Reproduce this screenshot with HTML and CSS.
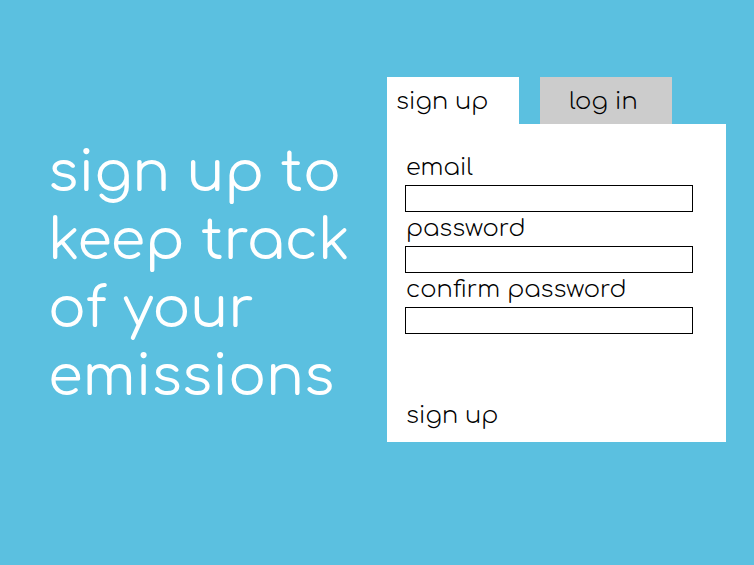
FILE: index.html
```html
<!DOCTYPE html>
<html lang="en">
<head>
<meta charset="utf-8">
<meta name="viewport" content="width=device-width, initial-scale=1">
<title>Sign up</title>
<link rel="stylesheet" href="styles.css">
</head>
<body>
<main class="page">
  <h1 class="headline"><span>sign up to</span> <span>keep track</span> <span>of your</span> <span>emissions</span></h1>
  <section class="account">
    <nav class="tabs">
      <button class="tab tab-active" type="button">sign up</button>
      <button class="tab" type="button">log in</button>
    </nav>
    <form class="card">
      <label class="label" for="email">email</label>
      <input class="field" id="email" type="email">
      <label class="label" for="password">password</label>
      <input class="field" id="password" type="password">
      <label class="label" for="confirm">confirm password</label>
      <input class="field" id="confirm" type="password">
      <button class="submit" type="button">sign up</button>
    </form>
  </section>
</main>
</body>
</html>
```

FILE: styles.css
```css
* {
  box-sizing: border-box;
}

body {
  margin: 0;
  min-height: 100vh;
  background: #5bc0e0;
  color: #000;
  font-family: Comfortaa, Quicksand, Lato, sans-serif;
  font-size: 24px;
  font-weight: 300;
  line-height: 32px;
}

button,
input {
  font: inherit;
  color: inherit;
  border: 0;
  border-radius: 0;
}

.page {
  display: grid;
  grid-template-columns: minmax(0, 339fr) minmax(0, 339fr);
  align-items: start;
  padding: 77px 28px 0 48px;
}

.headline {
  margin: 62px 0 0;
  color: #fff;
  font-size: 56px;
  font-weight: 400;
  line-height: 68px;
}

.headline span {
  display: block;
  white-space: nowrap;
}

.tabs {
  display: flex;
  gap: 21px;
}

.tab {
  width: 132px;
  height: 47px;
  padding: 2px 14px 0 9px;
  background: #ccc;
  text-align: center;
}

.tab-active {
  background: #fff;
  text-align: left;
}

.card {
  display: flex;
  flex-direction: column;
  padding: 27px 33px 10px 18px;
  background: #fff;
}

.label {
  height: 34px;
  padding: 1px 0 0 1px;
}

.field {
  width: 100%;
  height: 27px;
  padding: 0 8px;
  border: 1px solid #000;
  background: #fff;
}

.submit {
  align-self: flex-start;
  margin-top: 66px;
  padding: 0 0 0 1px;
  background: none;
}
```
